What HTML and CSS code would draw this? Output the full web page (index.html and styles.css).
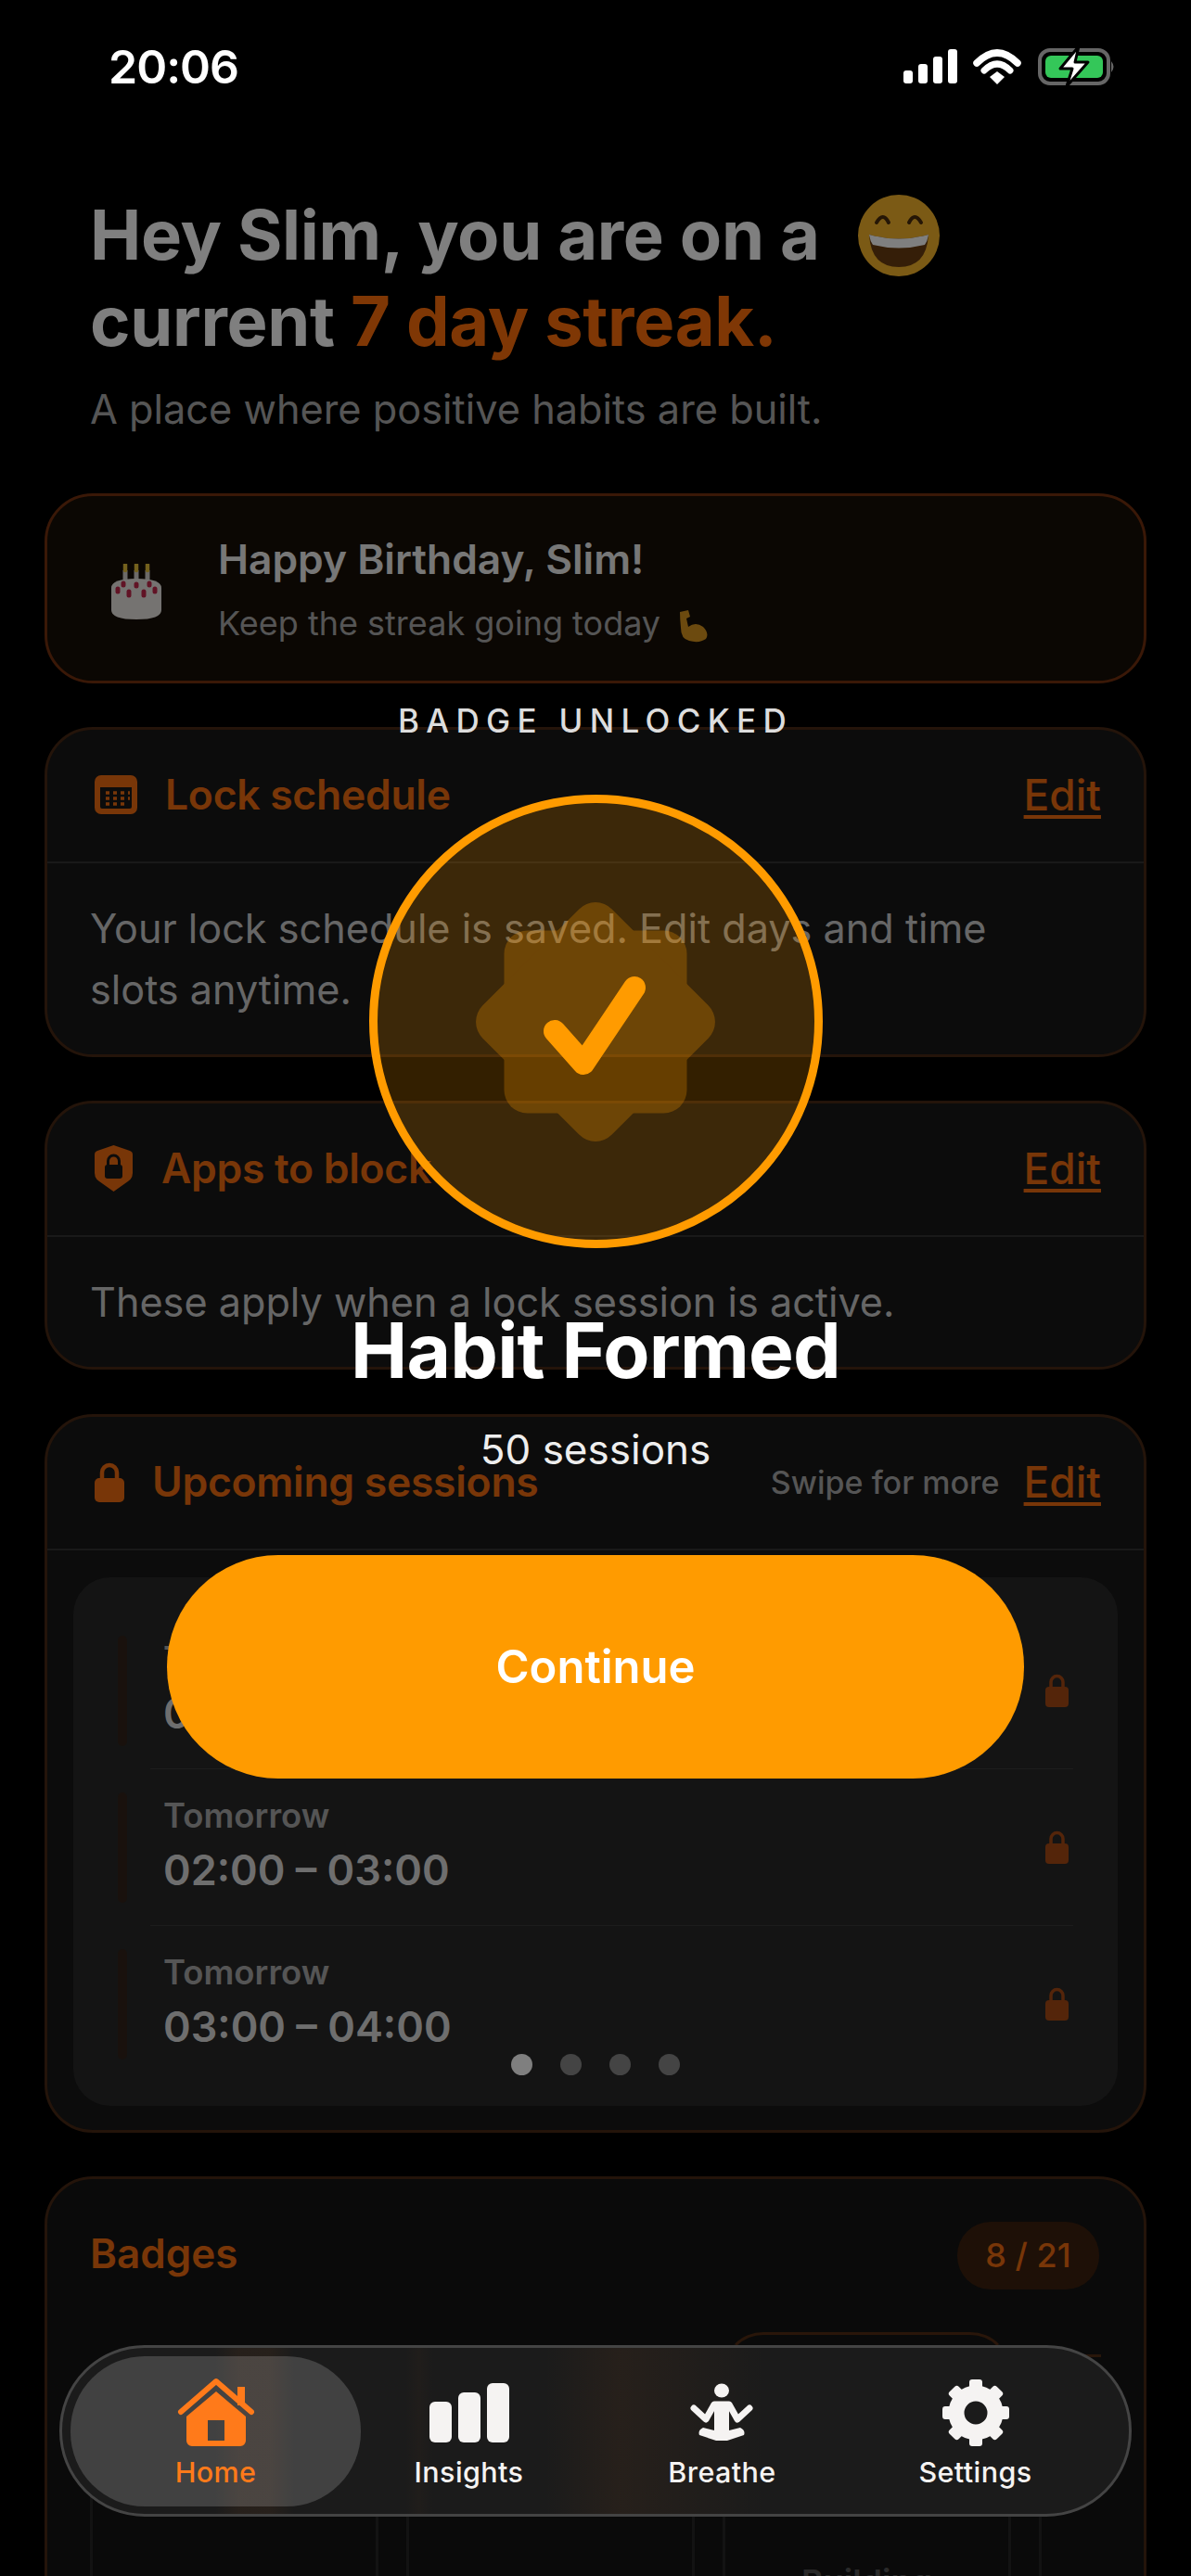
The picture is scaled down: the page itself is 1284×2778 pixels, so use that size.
FILE: index.html
```html
<!DOCTYPE html>
<html lang="en">
<head>
    <meta charset="UTF-8">
    <title>Home</title>
    <link rel="stylesheet" href="styles.css">
</head>
<body>
<div class="screen">

    <main class="page">
        <!--STATUS BAR-->
        <div class="status">
            <span class="clock">20:06</span>
            <svg class="status-icons" width="232" height="44" viewBox="0 0 232 44">
                <rect x="3" y="25" width="10" height="14" rx="3" fill="#fff"/>
                <rect x="19" y="18" width="10" height="21" rx="3" fill="#fff"/>
                <rect x="35" y="10" width="10" height="29" rx="3" fill="#fff"/>
                <rect x="51" y="2" width="10" height="37" rx="3" fill="#fff"/>
                <path d="M84 16 Q106 -6 128 16" fill="none" stroke="#fff" stroke-width="7.5" stroke-linecap="round" transform="translate(-2 1)"/>
                <path d="M92 25 Q106 11 120 25" fill="none" stroke="#fff" stroke-width="7" stroke-linecap="round" transform="translate(-2 0)"/>
                <path d="M96 32 L104 26 L112 32 L104 40 Z" fill="#fff"/>
                <rect x="150" y="3" width="74" height="36" rx="11" fill="none" stroke="#666" stroke-width="4"/>
                <rect x="156" y="9" width="62" height="24" rx="6" fill="#34c759"/>
                <path d="M227 15 Q232 21 227 27 Z" fill="#666"/>
                <path d="M192 -1 L172 23 L185 23 L179 42 L202 16 L188 16 Z" fill="#fff" stroke="#000" stroke-width="3" stroke-linejoin="round"/>
            </svg>
        </div>

        <!--GREETING-->
        <header class="greeting">
            <h1>Hey Slim, you are on a
                <svg class="smiley" width="88" height="88" viewBox="0 0 88 88">
                    <circle cx="44" cy="44" r="44" fill="#f6b52a"/>
                    <path d="M20 30 Q27 18 33 30 M55 30 Q61 18 68 30" fill="none" stroke="#4a2c0c" stroke-width="4" stroke-linecap="round"/>
                    <path d="M12 43 Q44 52 76 43 Q74 78 44 78 Q14 78 12 43 Z" fill="#6b3d10"/>
                    <path d="M12 43 Q44 52 76 43 Q75 50 72 54 Q44 61 16 54 Q13 50 12 43 Z" fill="#fff"/>
                </svg>
                <br>current <span class="accent">7 day streak.</span></h1>
            <p class="tagline">A place where positive habits are built.</p>
        </header>

        <!--BURSDAG-->
        <section class="card birthday">
            <svg class="cake" width="56" height="60" viewBox="0 0 56 60">
                <path d="M16 7v16M28 7v16M40 7v16" stroke="#d8d4d0" stroke-width="5"/>
                <path d="M16 1v6M28 1v6M40 1v6" stroke="#e8c23a" stroke-width="4.500" stroke-linecap="round"/>
                <path d="M1 26 Q1 16 28 16 Q55 16 55 26 V50 Q55 60 28 60 Q1 60 1 50 Z" fill="#ebe6e2"/>
                <path d="M8 27v3M20 30v4M36 30v4M48 27v3" stroke="#c2274a" stroke-width="5" stroke-linecap="round"/>
                <path d="M14 21v2M28 22v2M42 21v2" stroke="#c2274a" stroke-width="5" stroke-linecap="round"/>
            </svg>
            <div class="birthday-text">
                <div class="birthday-title">Happy Birthday, Slim!</div>
                <div class="birthday-sub">Keep the streak going today
                    <svg class="muscle" width="36" height="36" viewBox="0 0 36 36">
                        <path d="M5 3 L14 1 L16 8 L12 10 L14 19 Q22 13 30 19 Q37 26 33 32 Q26 37 15 34 Q6 32 6 20 Q5 10 5 3 Z" fill="#d9951f"/>
                    </svg>
                </div>
            </div>
        </section>

        <!--LOCK SCHEDULE-->
        <section class="card schedule">
            <div class="card-head">
                <svg class="head-icon" width="46" height="42" viewBox="0 0 46 42">
                    <path fill-rule="evenodd" fill="currentColor" d="M7 0h32a7 7 0 0 1 7 7v28a7 7 0 0 1-7 7H7a7 7 0 0 1-7-7V7a7 7 0 0 1 7-7Zm-1 13v21a2 2 0 0 0 2 2h30a2 2 0 0 0 2-2V13Z"/>
                    <path d="M12 19h4M20 19h4M28 19h4M36 19h2M12 25h4M20 25h4M28 25h4M36 25h2M12 31h4M20 31h4M28 31h4" stroke="currentColor" stroke-width="3.5"/>
                </svg>
                <h2 class="head-title">Lock schedule</h2>
                <a class="edit">Edit</a>
            </div>
            <p class="card-body">Your lock schedule is saved. Edit days and time<br>slots anytime.</p>
        </section>

        <!--APPS-->
        <section class="card apps">
            <div class="card-head">
                <svg class="head-icon shield" width="41" height="50" viewBox="0 0 41 50">
                    <path fill="currentColor" d="M20.5 0 L38 6 Q41 7 41 10 V30 Q41 36 36 39 L20.5 50 L5 39 Q0 36 0 30 V10 Q0 7 3 6 Z"/>
                    <rect x="11" y="21" width="19" height="15" rx="3" fill="#181818"/>
                    <path d="M14.5 22v-5a6 6 0 0 1 12 0v5" fill="none" stroke="#181818" stroke-width="3"/>
                </svg>
                <h2 class="head-title">Apps to block</h2>
                <a class="edit">Edit</a>
            </div>
            <p class="card-body">These apply when a lock session is active.</p>
        </section>

        <!--UPCOMING-->
        <section class="card upcoming">
            <div class="card-head">
                <svg class="head-icon" width="32" height="44" viewBox="0 0 32 44">
                    <path d="M8 20v-8a8 8 0 0 1 16 0v8" fill="none" stroke="currentColor" stroke-width="4.5"/>
                    <rect y="18" width="32" height="26" rx="5" fill="currentColor"/>
                </svg>
                <h2 class="head-title">Upcoming sessions</h2>
                <span class="swipe">Swipe for more</span>
                <a class="edit">Edit</a>
            </div>
            <div class="panel">
                <div class="session">
                    <div class="session-bar"></div>
                    <div class="session-text">
                        <div class="session-day">Tomorrow</div>
                        <div class="session-time">01:00 – 02:00</div>
                    </div>
                    <svg class="session-lock" width="25" height="36" viewBox="0 0 25 36">
                        <path d="M6 16V9a6.500 6.500 0 0 1 13 0v7" fill="none" stroke="currentColor" stroke-width="3.500"/>
                        <rect y="14" width="25" height="22" rx="4" fill="currentColor"/>
                    </svg>
                </div>
                <div class="session-line"></div>
                <div class="session">
                    <div class="session-bar"></div>
                    <div class="session-text">
                        <div class="session-day">Tomorrow</div>
                        <div class="session-time">02:00 – 03:00</div>
                    </div>
                    <svg class="session-lock" width="25" height="36" viewBox="0 0 25 36">
                        <path d="M6 16V9a6.500 6.500 0 0 1 13 0v7" fill="none" stroke="currentColor" stroke-width="3.500"/>
                        <rect y="14" width="25" height="22" rx="4" fill="currentColor"/>
                    </svg>
                </div>
                <div class="session-line"></div>
                <div class="session">
                    <div class="session-bar"></div>
                    <div class="session-text">
                        <div class="session-day">Tomorrow</div>
                        <div class="session-time">03:00 – 04:00</div>
                    </div>
                    <svg class="session-lock" width="25" height="36" viewBox="0 0 25 36">
                        <path d="M6 16V9a6.500 6.500 0 0 1 13 0v7" fill="none" stroke="currentColor" stroke-width="3.500"/>
                        <rect y="14" width="25" height="22" rx="4" fill="currentColor"/>
                    </svg>
                </div>
                <div class="dots">
                    <span class="dot dot-on"></span>
                    <span class="dot"></span>
                    <span class="dot"></span>
                    <span class="dot"></span>
                </div>
            </div>
        </section>

        <!--BADGES-->
        <section class="card badges">
            <div class="badges-head">
                <h2 class="badges-title">Badges</h2>
                <span class="badges-count">8 / 21</span>
            </div>
            <div class="tiles">
                <div class="tile"></div>
                <div class="tile"></div>
                <div class="tile tile-high"><span class="tile-name">Building</span></div>
                <div class="tile tile-last"></div>
            </div>
        </section>
    </main>

    <!--OVERLAY OVER HELE SIDEN-->
    <div class="dim"></div>

    <div class="modal">
        <div class="modal-kicker">BADGE UNLOCKED</div>
        <div class="medal">
            <svg width="258" height="258" viewBox="-129 -129 258 258">
                <g opacity=".25" fill="#ff9b00">
                    <rect x="-98.500" y="-98.500" width="197" height="197" rx="25"/>
                    <rect x="-98.500" y="-98.500" width="197" height="197" rx="25" transform="rotate(45)"/>
                </g>
                <path d="M-44 10 L-13 45 L42 -37" fill="none" stroke="#ff9b00" stroke-width="24" stroke-linecap="round" stroke-linejoin="round"/>
            </svg>
        </div>
        <div class="modal-title">Habit Formed</div>
        <div class="modal-sub">50 sessions</div>
        <button class="continue">Continue</button>
    </div>

    <!--NAVIGASJON-->
    <nav class="tabs">
        <div class="tab tab-on">
            <svg width="90" height="80" viewBox="0 0 90 80">
                <path d="M7 40 L45 7 L83 40" fill="none" stroke="#ff7a1a" stroke-width="6" stroke-linecap="round" stroke-linejoin="round"/>
                <rect x="68" y="13" width="8" height="20" fill="#ff7a1a"/>
                <path fill-rule="evenodd" fill="#ff7a1a" d="M45 18 L77 45 V71 a6 6 0 0 1-6 6 H19 a6 6 0 0 1-6-6 V45 Z M36 49 V71 H54 V49 Z"/>
            </svg>
            <span class="tab-label">Home</span>
        </div>
        <div class="tab">
            <svg width="90" height="80" viewBox="0 0 90 80">
                <rect x="2" y="29" width="24" height="44" rx="6" fill="#f5f3f2"/>
                <rect x="33" y="19" width="24" height="54" rx="6" fill="#f5f3f2"/>
                <rect x="64" y="9" width="24" height="64" rx="6" fill="#f5f3f2"/>
            </svg>
            <span class="tab-label">Insights</span>
        </div>
        <div class="tab">
            <svg width="90" height="80" viewBox="0 0 90 80">
                <ellipse cx="44" cy="17" rx="8" ry="7.500" fill="#f5f3f2"/>
                <path d="M14 36 L27 48 L36 32 H52 L61 48 L74 36" fill="none" stroke="#f5f3f2" stroke-width="7" stroke-linecap="round" stroke-linejoin="round"/>
                <path d="M36 30 H52 V62 H36 Z" fill="#f5f3f2"/>
                <path d="M24 57 L44 62 L64 57 Q70 60 68 65 L50 71 H38 L20 65 Q18 60 24 57 Z" fill="#f5f3f2"/>
            </svg>
            <span class="tab-label">Breathe</span>
        </div>
        <div class="tab">
            <svg width="90" height="80" viewBox="0 0 90 80">
                <circle cx="45" cy="41" r="21" fill="none" stroke="#f5f3f2" stroke-width="17"/>
                <g fill="#f5f3f2">
                    <rect x="38" y="5" width="14" height="18" rx="3"/>
                    <rect x="38" y="5" width="14" height="18" rx="3" transform="rotate(45 45 41)"/>
                    <rect x="38" y="5" width="14" height="18" rx="3" transform="rotate(90 45 41)"/>
                    <rect x="38" y="5" width="14" height="18" rx="3" transform="rotate(135 45 41)"/>
                    <rect x="38" y="5" width="14" height="18" rx="3" transform="rotate(180 45 41)"/>
                    <rect x="38" y="5" width="14" height="18" rx="3" transform="rotate(225 45 41)"/>
                    <rect x="38" y="5" width="14" height="18" rx="3" transform="rotate(270 45 41)"/>
                    <rect x="38" y="5" width="14" height="18" rx="3" transform="rotate(315 45 41)"/>
                </g>
            </svg>
            <span class="tab-label">Settings</span>
        </div>
    </nav>

</div>
</body>
</html>
```

FILE: styles.css
```css
* {
    box-sizing: border-box;
}
body {
    margin: 0;
    background-color: #000;
    font-family: "Inter", "Liberation Sans", sans-serif;
    color: #fff;
}
h1, h2, p {
    margin: 0;
}
.screen {
    position: relative;
    width: 1284px;
    height: 2778px;
    overflow: hidden;
}
.page {
    padding: 0 48px;
}

/*STATUS BAR*/
.status {
    position: relative;
    z-index: 2;
    height: 144px;
    display: flex;
    justify-content: space-between;
    align-items: flex-start;
    padding: 44px 0 0 69px;
}
.clock {
    font-size: 50px;
    line-height: 56px;
    font-weight: 600;
    letter-spacing: -1px;
}
.status-icons {
    margin: 7px 33px 0 0;
    overflow: visible;
}

/*GREETING*/
.greeting {
    padding: 63px 0 0 49px;
}
h1 {
    font-size: 74px;
    line-height: 93px;
    font-weight: 700;
    letter-spacing: -.3px;
    color: #fff;
}
.smiley {
    margin: -30px 0 -18px 24px;
}
.accent {
    color: #ff6f0a;
}
.tagline {
    margin-top: 18px;
    font-size: 43.300px;
    line-height: 60px;
    color: #aaa;
}

/*CARDS*/
.card {
    border: 3px solid #482814;
    border-radius: 52px;
    background-color: #181818;
}
.birthday {
    margin-top: 61px;
    height: 205px;
    display: flex;
    align-items: center;
    gap: 60px;
    padding: 6px 0 0 68px;
    background-color: #170e06;
    border-color: #74300f;
}
.birthday-title {
    font-size: 44.300px;
    line-height: 60px;
    font-weight: 600;
    color: #eee;
}
.birthday-sub {
    margin-top: 9px;
    font-size: 36px;
    line-height: 60px;
    color: #aaa;
}
.muscle {
    vertical-align: -8px;
    margin-left: 6px;
}
.schedule {
    margin-top: 47px;
}
.apps {
    margin-top: 47px;
}
.upcoming {
    margin-top: 48px;
    height: 775px;
}
.card-head {
    height: 144px;
    padding: 0 46px 2px 51px;
    display: flex;
    align-items: center;
    border-bottom: 2px solid #333;
    color: #f06c10;
}
.head-icon {
    flex-shrink: 0;
    margin-right: 30px;
}
.shield {
    margin-right: 31px;
}
.head-title {
    flex: 1;
    font-size: 44.500px;
    font-weight: 600;
    letter-spacing: -.3px;
}
.edit {
    font-size: 46px;
    font-weight: 500;
    text-decoration: underline;
    text-decoration-thickness: 4px;
    text-underline-offset: 5px;
}
.swipe {
    margin-right: 26px;
    font-size: 34px;
    font-weight: 500;
    color: #aaa;
}
.card-body {
    padding: 37px 48px 37px 46px;
    font-size: 43.200px;
    line-height: 66px;
    color: #ccc;
}

/*SESSIONS*/
.panel {
    position: relative;
    height: 570px;
    margin: 29px 28px 0;
    padding-top: 38px;
    border-radius: 40px;
    background-color: #282828;
}
.session {
    height: 168px;
    display: flex;
    align-items: center;
    padding: 0 53px 0 48px;
}
.session-bar {
    flex-shrink: 0;
    width: 10px;
    height: 119px;
    margin-right: 39px;
    border-radius: 5px;
    background-color: #33231a;
}
.session-text {
    flex: 1;
}
.session-day {
    font-size: 36.500px;
    line-height: 50px;
    font-weight: 600;
    color: #aaa;
}
.session-time {
    font-size: 45px;
    line-height: 68px;
    font-weight: 600;
    color: #ddd;
}
.session-lock {
    color: #a84a14;
}
.session-line {
    height: 1px;
    margin: 0 48px 0 83px;
    background-color: #3a3a3a;
}
.dots {
    position: absolute;
    left: 0;
    right: 0;
    bottom: 33px;
    display: flex;
    justify-content: center;
    gap: 30px;
}
.dot {
    width: 23px;
    height: 23px;
    border-radius: 50%;
    background-color: #888;
}
.dot-on {
    background-color: #fff;
}

/*BADGES*/
.badges {
    margin-top: 47px;
    height: 600px;
    background-color: #141414;
}
.badges-head {
    height: 119px;
    margin-top: 46px;
    padding: 0 48px 0 46px;
    display: flex;
    justify-content: space-between;
    align-items: flex-start;
}
.badges-title {
    margin-top: 6px;
    font-size: 44px;
    line-height: 56px;
    font-weight: 600;
    color: #f06c10;
}
.badges-count {
    width: 153px;
    height: 73px;
    border-radius: 36px;
    background-color: #3c200e;
    text-align: center;
    font-size: 36px;
    line-height: 73px;
    font-weight: 500;
    color: #f06c10;
}
.tiles {
    display: flex;
    gap: 30px;
    margin: 0 46px;
    overflow: hidden;
    height: 420px;
}
.tile {
    flex: 0 0 311px;
    height: 400px;
    margin-top: 24px;
    border: 3px solid #262626;
    border-radius: 44px;
    background-color: #141414;
}
.tile-high {
    margin-top: 0;
    text-align: center;
    border-top-color: #522c14;
}
.tile-last {
    border-top-color: #522c14;
}
.tile-name {
    display: block;
    margin-top: 244px;
    font-size: 36px;
    font-weight: 600;
    color: #555;
}

/*OVERLAY*/
.dim {
    position: absolute;
    inset: 0;
    background-color: rgba(0, 0, 0, .5);
}
.modal {
    position: absolute;
    inset: 0;
    display: flex;
    flex-direction: column;
    align-items: center;
    padding-top: 757px;
}
.modal-kicker {
    font-size: 35px;
    line-height: 40px;
    font-weight: 500;
    letter-spacing: 7.300px;
    color: #ddd;
}
.medal {
    width: 489px;
    height: 489px;
    margin-top: 60px;
    display: flex;
    align-items: center;
    justify-content: center;
    border: 9px solid #ff9b00;
    border-radius: 50%;
    background-color: rgba(255, 155, 0, .2);
}
.modal-title {
    margin-top: 66px;
    font-size: 82px;
    line-height: 90px;
    font-weight: 700;
    letter-spacing: -.8px;
}
.modal-sub {
    margin-top: 31px;
    font-size: 44px;
    line-height: 60px;
    color: #eee;
}
.continue {
    width: 924px;
    height: 241px;
    margin-top: 84px;
    border: none;
    border-radius: 120px;
    background-color: #ff9b00;
    color: #fff;
    font-family: inherit;
    font-size: 49px;
    font-weight: 600;
}

/*NAVIGASJON*/
.tabs {
    position: absolute;
    left: 64px;
    right: 64px;
    bottom: 64px;
    height: 185px;
    display: flex;
    padding: 29px 0 0 29px;
    border: 3px solid #444;
    border-radius: 92px;
    background:
        linear-gradient(90deg, transparent 165px, rgba(255, 122, 26, .05) 190px, rgba(255, 122, 26, .05) 225px, transparent 250px),
        linear-gradient(90deg, transparent 370px, rgba(255, 122, 26, .025) 385px, transparent 400px),
        linear-gradient(90deg, transparent 520px, rgba(255, 122, 26, .05) 600px, transparent 760px),
        #1b1b1b;
}
.tab {
    position: relative;
    width: 273px;
    display: flex;
    flex-direction: column;
    align-items: center;
}
.tab svg {
    position: relative;
}
.tab-on::before {
    content: "";
    position: absolute;
    left: -20px;
    right: -20px;
    top: -20px;
    bottom: 8px;
    border-radius: 80px;
    background-color: rgba(255, 255, 255, .17);
}
.tab-label {
    position: relative;
    margin-top: 5px;
    font-size: 30.500px;
    line-height: 40px;
    font-weight: 500;
    letter-spacing: .4px;
    color: #f5f3f2;
}
.tab-on .tab-label {
    color: #ff7a1a;
}
```
